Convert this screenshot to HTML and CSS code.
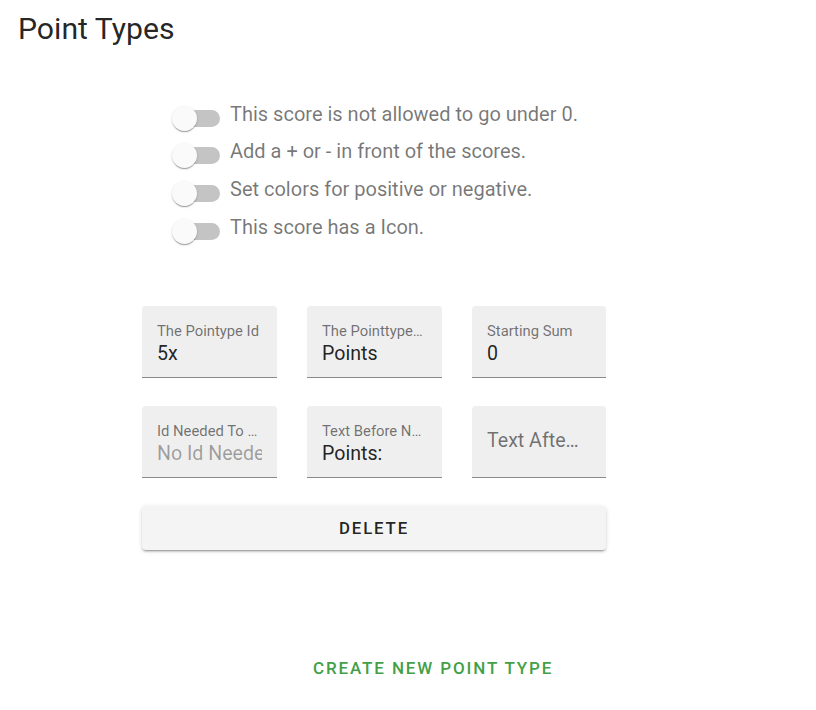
FILE: index.html
```html
<!DOCTYPE html>
<html>
<head>
<meta charset="utf-8">
<link rel="stylesheet" href="styles.css">
</head>
<body>
<h1 class="title">Point Types</h1>
<div class="switches">
  <label class="sw-row"><span class="switch"><span class="track"></span><span class="thumb"></span></span><span class="sw-label">This score is not allowed to go under 0.</span></label>
  <label class="sw-row"><span class="switch"><span class="track"></span><span class="thumb"></span></span><span class="sw-label">Add a + or - in front of the scores.</span></label>
  <label class="sw-row"><span class="switch"><span class="track"></span><span class="thumb"></span></span><span class="sw-label">Set colors for positive or negative.</span></label>
  <label class="sw-row"><span class="switch"><span class="track"></span><span class="thumb"></span></span><span class="sw-label">This score has a Icon.</span></label>
</div>
<div class="form">
  <div class="grid">
    <div class="field"><div class="f-label">The Pointype Id</div><div class="f-value">5x</div></div>
    <div class="field"><div class="f-label">The Pointtype Name</div><div class="f-value">Points</div></div>
    <div class="field"><div class="f-label">Starting Sum</div><div class="f-value">0</div></div>
    <div class="field"><div class="f-label">Id Needed To Display</div><div class="f-value placeholder">No Id Needed</div></div>
    <div class="field"><div class="f-label">Text Before Number</div><div class="f-value">Points:</div></div>
    <div class="field empty"><div class="f-big">Text After Number</div></div>
  </div>
  <button class="delete">DELETE</button>
</div>
<div class="create-wrap"><button class="create">CREATE NEW POINT TYPE</button></div>
</body>
</html>
```
FILE: styles.css
```css
* { box-sizing: border-box; }
body {
  margin: 0;
  font-family: Roboto, "Liberation Sans", sans-serif;
  background: #fff;
  width: 816px;
  height: 710px;
  overflow: hidden;
}
.title {
  margin: 0;
  padding: 11px 0 0 18px;
  font-size: 30.2px;
  font-weight: 400;
  line-height: 36px;
  color: rgba(0,0,0,0.87);
}
.switches {
  margin: 57px 0 0 168px;
  display: flex;
  flex-direction: column;
}
.sw-row {
  display: flex;
  align-items: center;
  height: 37.6px;
}
.switch {
  position: relative;
  width: 62px;
  height: 30px;
  flex: none;
}
.track {
  position: absolute;
  left: 10px;
  top: 2px;
  width: 42px;
  height: 17px;
  border-radius: 9px;
  background: #c4c4c4;
}
.thumb {
  position: absolute;
  left: 4px;
  top: -2px;
  width: 25px;
  height: 25px;
  border-radius: 50%;
  background: #fafafa;
  box-shadow: 0 2px 1px -1px rgba(0,0,0,0.2), 0 1px 1px 0 rgba(0,0,0,0.14), 0 1px 3px 0 rgba(0,0,0,0.12);
}
.sw-label {
  font-size: 20px;
  color: rgba(0,0,0,0.54);
  line-height: 24px;
  margin-top: -18px;
}
.form {
  margin: 52px 0 0 142px;
  width: 464px;
}
.grid {
  display: grid;
  grid-template-columns: 135px 135px 134px;
  column-gap: 30px;
  row-gap: 28px;
}
.field {
  height: 72px;
  background: #efefef;
  border-radius: 4px 4px 0 0;
  border-bottom: 1px solid #8a8a8a;
  padding: 16px 0 0 15px;
  overflow: hidden;
}
.f-label {
  width: 104px;
  font-size: 14.8px;
  line-height: 18px;
  color: rgba(0,0,0,0.54);
  white-space: nowrap;
  overflow: hidden;
  text-overflow: ellipsis;
}
.f-value {
  width: 105px;
  margin-top: 2px;
  font-size: 19.6px;
  line-height: 24px;
  color: rgba(0,0,0,0.87);
  white-space: nowrap;
  overflow: hidden;
}
.f-value.placeholder { color: rgba(0,0,0,0.35); }
.field.empty { padding-top: 23px; }
.f-big {
  width: 93px;
  font-size: 19.6px;
  line-height: 24px;
  color: rgba(0,0,0,0.54);
  white-space: nowrap;
  overflow: hidden;
  text-overflow: ellipsis;
}
.delete {
  display: block;
  margin-top: 28px;
  width: 464px;
  height: 44px;
  border: none;
  border-radius: 4px;
  background: #f4f4f4;
  box-shadow: 0 3px 1px -2px rgba(0,0,0,0.2), 0 2px 2px 0 rgba(0,0,0,0.14), 0 1px 5px 0 rgba(0,0,0,0.12);
  font-family: Roboto, "Liberation Sans", sans-serif;
  font-size: 16.8px;
  font-weight: 500;
  letter-spacing: 0.11em;
  color: rgba(0,0,0,0.87);
}
.create-wrap {
  margin: 102px 0 0 300px;
}
.create {
  border: none;
  background: none;
  padding: 6px 13px;
  font-family: Roboto, "Liberation Sans", sans-serif;
  font-size: 17px;
  font-weight: 500;
  letter-spacing: 0.11em;
  color: #43a047;
}
```
